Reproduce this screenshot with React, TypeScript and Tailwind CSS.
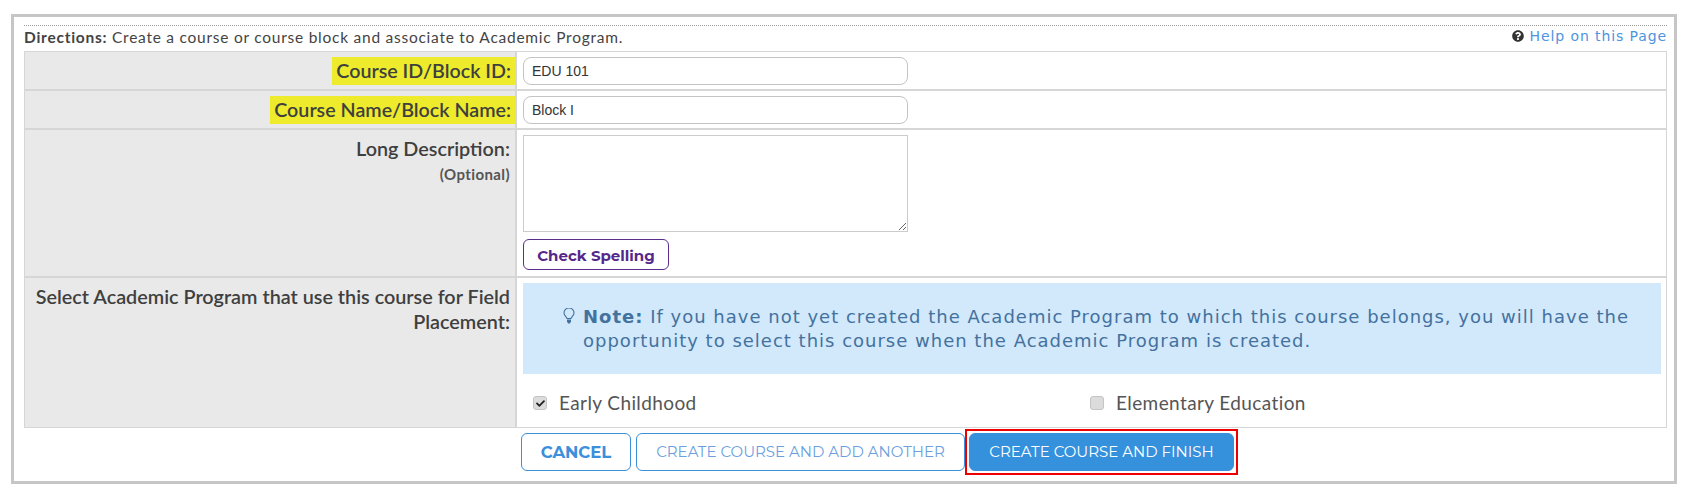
import { FaQuestionCircle, FaCheck } from "react-icons/fa"

const lato = "font-['Lato','Liberation_Sans',sans-serif]"
const verdana = "font-['DejaVu_Sans','Liberation_Sans',sans-serif]"
const buttonBase =
  "flex h-[38px] items-center justify-center rounded-[6px] border border-[#3b90dc] pt-[1px] font-['Montserrat','Lato',sans-serif] text-[15px]"

function Label({ children, mark }: { children: React.ReactNode; mark?: boolean }) {
  if (mark) {
    return (
      <span className="flex h-[28px] items-center bg-[#edeb2c] pl-[4px] pr-[4px] text-[19.700px] font-semibold text-[#3f3f3f]">
        {children}
      </span>
    )
  }
  return <span className="text-[19.800px] font-semibold leading-[22px] text-[#3f3f3f]">{children}</span>
}

function Check({ checked, label }: { checked?: boolean; label: string }) {
  return (
    <label className="flex items-center gap-[12px] text-[19px] tracking-[0.4px] text-[#555555]">
      <span className="flex h-[14px] w-[14px] items-center justify-center rounded-[3px] border border-[#c4c4c4] bg-[#dcdcdc] text-[#222222]">
        {checked && <FaCheck className="h-[9px] w-[9px]" />}
      </span>
      {label}
    </label>
  )
}

function Bulb() {
  return (
    <svg viewBox="0 0 12 16" className="mr-[8px] mt-[-26px] h-[16px] w-[12px] shrink-0 text-[#44729e]" fill="none">
      <path
        d="M4 10.5C3.6 8.9 1 7.8 1 5a5 5 0 0 1 10 0c0 2.8-2.6 3.900-3 5.500z"
        stroke="currentColor"
        strokeWidth="1.1"
      />
      <path d="M4 11.500h4v2.200L6.800 15.500H5.200L4 13.700z" fill="currentColor" />
    </svg>
  )
}

export default function App() {
  return (
    <div className={`h-[502px] w-[1688px] bg-white pl-[11px] pt-[14px] ${lato}`}>
      <div className="h-[470px] w-[1666px] border-[3px] border-[#c6c6c6] bg-white pl-[10px] pr-[7px] pt-[8px]">
        <div className="border-t border-dotted border-[#9a9a9a]" />
        <div className="flex h-[25px] items-start justify-between">
          <p className="pt-[1px] text-[15.500px] leading-[20px] tracking-[0.75px] text-[#444444]">
            <b className="font-bold">Directions:</b> Create a course or course block and associate to Academic Program.
          </p>
          <a className={`flex items-center gap-[6px] pt-[1px] text-[14px] leading-[18px] tracking-[0.9px] text-[#4d94e0] ${verdana}`}>
            <FaQuestionCircle className="h-[12px] w-[12px] text-[#333333]" />
            Help on this Page
          </a>
        </div>

        <div className="border border-[#d6d6d6]">
          <div className="flex h-[39px] border-b-2 border-[#d6d6d6]">
            <div className="flex w-[492px] items-center justify-end border-r-2 border-[#d6d6d6] bg-[#e9e9e9]">
              <Label mark>Course ID/Block ID:</Label>
            </div>
            <div className="flex flex-1 items-center pl-[6px]">
              <input
                defaultValue="EDU 101"
                className="h-[28px] w-[385px] rounded-[8px] border border-[#c4c4c4] px-[8px] font-['Liberation_Sans',sans-serif] text-[14px] text-[#333333]"
              />
            </div>
          </div>
          <div className="flex h-[39px] border-b-2 border-[#d6d6d6]">
            <div className="flex w-[492px] items-center justify-end border-r-2 border-[#d6d6d6] bg-[#e9e9e9] pt-[1px]">
              <Label mark>Course Name/Block Name:</Label>
            </div>
            <div className="flex flex-1 items-center pl-[6px]">
              <input
                defaultValue="Block I"
                className="h-[28px] w-[385px] rounded-[8px] border border-[#c4c4c4] px-[8px] font-['Liberation_Sans',sans-serif] text-[14px] text-[#333333]"
              />
            </div>
          </div>
          <div className="flex h-[148px] border-b-2 border-[#d6d6d6]">
            <div className="flex w-[492px] flex-col items-end border-r-2 border-[#d6d6d6] bg-[#e9e9e9] pr-[5px] pt-[7px]">
              <Label>Long Description:</Label>
              <span className="mt-[7px] text-[15px] font-bold leading-[16px] tracking-[0.4px] text-[#555555]">(Optional)</span>
            </div>
            <div className="flex flex-1 flex-col items-start pl-[6px] pt-[5px]">
              <textarea className="h-[97px] w-[385px] border border-[#cccccc] bg-white" />
              <button className="mt-[7px] h-[31px] w-[146px] rounded-[6px] border border-[#5b2d8c] pt-[3px] font-['Montserrat','Inter',sans-serif] text-[15px] font-bold text-[#56278a]">
                Check Spelling
              </button>
            </div>
          </div>
          <div className="flex h-[149px]">
            <div className="w-[492px] border-r-2 border-[#d6d6d6] bg-[#e9e9e9] pl-[1px] pr-[5px] pt-[7px] text-right">
              <Label>Select Academic Program that use this course for Field Placement:</Label>
            </div>
            <div className="flex-1 pl-[6px] pr-[5px] pt-[5px]">
              <div className={`flex h-[91px] items-center bg-[#d2e8fb] pl-[40px] pr-[20px] text-[18px] leading-[24px] tracking-[1px] text-[#44729e] ${verdana}`}>
                <Bulb />
                <p>
                  <b className="font-bold">Note:</b> If you have not yet created the Academic Program to which this
                  course belongs, you will have the opportunity to select this course when the Academic Program is
                  created.
                </p>
              </div>
              <div className="mt-[15px] flex pl-[10px]">
                <div className="w-[557px]">
                  <Check checked label="Early Childhood" />
                </div>
                <Check label="Elementary Education" />
              </div>
            </div>
          </div>
        </div>

        <div className="flex justify-start pl-[497px] pt-[5px]">
          <button className={`${buttonBase} w-[110px] !text-[16.500px] font-bold text-[#3b8fdb]`}>CANCEL</button>
          <button className={`${buttonBase} ml-[5px] w-[329px] text-[#6d9fe0]`}>CREATE COURSE AND ADD ANOTHER</button>
          <div className="mt-[-4px] border-2 border-[#ee0000] p-[2px]">
            <button className={`${buttonBase} w-[265px] bg-[#3691dd] text-white`}>CREATE COURSE AND FINISH</button>
          </div>
        </div>
      </div>
    </div>
  )
}
